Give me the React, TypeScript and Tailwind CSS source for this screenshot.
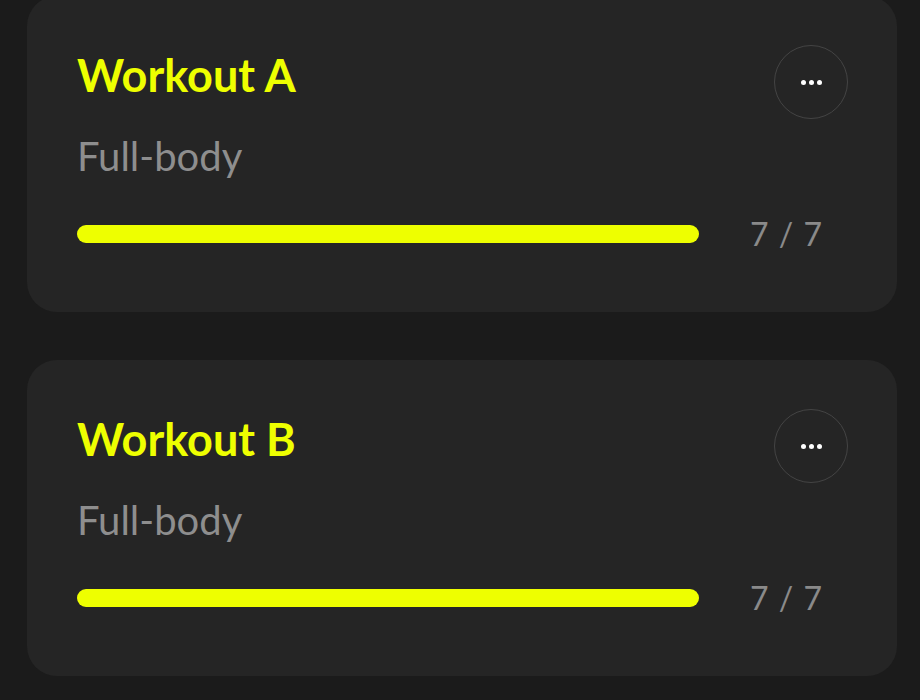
import React from 'react';

type Workout = {
  name: string;
  kind: string;
  done: number;
  total: number;
};

const workouts: Workout[] = [
  { name: 'Workout A', kind: 'Full-body', done: 7, total: 7 },
  { name: 'Workout B', kind: 'Full-body', done: 7, total: 7 },
];

function MoreButton() {
  return (
    <button className="flex h-[74px] w-[74px] shrink-0 items-center justify-center gap-[3px] rounded-full border-[1.5px] border-[#444444]">
      <span className="h-[5px] w-[5px] rounded-full bg-white" />
      <span className="h-[5px] w-[5px] rounded-full bg-white" />
      <span className="h-[5px] w-[5px] rounded-full bg-white" />
    </button>
  );
}

function WorkoutCard({ workout }: { workout: Workout }) {
  const pct = (workout.done / workout.total) * 100;
  return (
    <div className="rounded-[30px] bg-[#252525] pt-[49px] pb-[62px] pl-[50px] pr-[49px]">
      <div className="flex items-start justify-between">
        <div className="flex flex-col">
          <h2 className="mt-[8px] text-[45px] font-bold leading-none text-[#eeff00]">{workout.name}</h2>
          <p className="mt-[38px] text-[40px] leading-none text-[#8e8e8e]">{workout.kind}</p>
        </div>
        <MoreButton />
      </div>
      <div className="mt-[42px] flex items-center pr-[28px]">
        <div className="h-[18px] flex-1 rounded-full bg-[#2f2f2f]">
          <div className="h-full rounded-full bg-[#eeff00]" style={{ width: `${pct}%` }} />
        </div>
        <span className="ml-[51px] w-[70px] shrink-0 whitespace-nowrap text-center text-[32px] leading-none tracking-[1px] text-[#8a8a8a]">
          {workout.done} / {workout.total}
        </span>
      </div>
    </div>
  );
}

export default function App() {
  return (
    <div
      className="min-h-[700px] overflow-hidden bg-[#1b1b1b] pl-[27px] pr-[23px]"
      style={{ fontFamily: 'Lato, "Open Sans", sans-serif' }}
    >
      <div className="-mt-[4px] flex flex-col gap-[48px]">
        {workouts.map((w, i) => (
          <WorkoutCard key={i} workout={w} />
        ))}
      </div>
    </div>
  );
}
